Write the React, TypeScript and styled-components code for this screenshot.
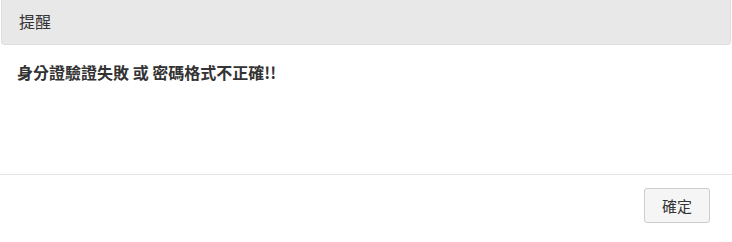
import styled, { createGlobalStyle } from 'styled-components';

const GlobalStyle = createGlobalStyle`
  html, body {
    margin: 0;
    padding: 0;
    background: #ffffff;
  }
  body {
    font-family: "Noto Sans CJK TC", "Liberation Sans", sans-serif;
    color: #333333;
  }
`;

const Dialog = styled.div`
  width: 732px;
  height: 242px;
  display: flex;
  flex-direction: column;
  box-sizing: border-box;
`;

const Header = styled.div`
  margin: 0 1px;
  height: 45px;
  box-sizing: border-box;
  display: flex;
  align-items: center;
  padding: 0 17px 2px;
  background: #e8e8e8;
  border: 1px solid #dddddd;
  border-top: none;
  border-radius: 0 0 4px 4px;
`;

const Title = styled.span`
  font-size: 16px;
  color: #333333;
`;

const Body = styled.div`
  height: 130px;
  box-sizing: border-box;
  padding: 15px 17px;
  border-bottom: 1px solid #e5e5e5;
`;

const Message = styled.p`
  margin: 0;
  font-size: 16px;
  font-weight: bold;
  line-height: 24px;
  color: #333333;
`;

const Footer = styled.div`
  display: flex;
  justify-content: flex-end;
  padding: 13px 22px 0 0;
`;

const Button = styled.button`
  width: 66px;
  height: 35px;
  padding: 0;
  font-family: inherit;
  font-size: 15px;
  color: #333333;
  background: #f5f5f5;
  border: 1px solid #cccccc;
  border-radius: 3px;
  cursor: pointer;
`;

export default function App() {
  return (
    <>
      <GlobalStyle />
      <Dialog>
        <Header>
          <Title>提醒</Title>
        </Header>
        <Body>
          <Message>身分證驗證失敗 或 密碼格式不正確!!</Message>
        </Body>
        <Footer>
          <Button>確定</Button>
        </Footer>
      </Dialog>
    </>
  );
}
